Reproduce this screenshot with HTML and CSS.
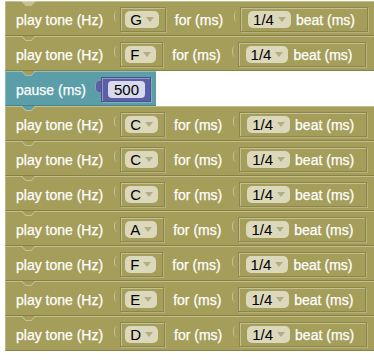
FILE: index.html
```html
<!DOCTYPE html>
<html lang="en">
<head>
    <meta charset="UTF-8">
    <title>Melody blocks</title>
    <link rel="stylesheet" href="styles.css">
</head>
<body>
    <div class="stack">
        <div class="block tone">
            <span class="label">play tone (Hz)</span>
            <span class="value note"><span class="drop">G<i class="arrow"></i></span></span>
            <span class="label">for (ms)</span>
            <span class="value beat"><span class="drop">1/4<i class="arrow"></i></span><span class="label">beat (ms)</span></span>
        </div>
        <div class="block tone">
            <span class="label">play tone (Hz)</span>
            <span class="value note"><span class="drop">F<i class="arrow"></i></span></span>
            <span class="label">for (ms)</span>
            <span class="value beat"><span class="drop">1/4<i class="arrow"></i></span><span class="label">beat (ms)</span></span>
        </div>
        <div class="block pause">
            <span class="label">pause (ms)</span>
            <span class="value number"><span class="field">500</span></span>
        </div>
        <div class="block tone">
            <span class="label">play tone (Hz)</span>
            <span class="value note"><span class="drop">C<i class="arrow"></i></span></span>
            <span class="label">for (ms)</span>
            <span class="value beat"><span class="drop">1/4<i class="arrow"></i></span><span class="label">beat (ms)</span></span>
        </div>
        <div class="block tone">
            <span class="label">play tone (Hz)</span>
            <span class="value note"><span class="drop">C<i class="arrow"></i></span></span>
            <span class="label">for (ms)</span>
            <span class="value beat"><span class="drop">1/4<i class="arrow"></i></span><span class="label">beat (ms)</span></span>
        </div>
        <div class="block tone">
            <span class="label">play tone (Hz)</span>
            <span class="value note"><span class="drop">C<i class="arrow"></i></span></span>
            <span class="label">for (ms)</span>
            <span class="value beat"><span class="drop">1/4<i class="arrow"></i></span><span class="label">beat (ms)</span></span>
        </div>
        <div class="block tone">
            <span class="label">play tone (Hz)</span>
            <span class="value note"><span class="drop">A<i class="arrow"></i></span></span>
            <span class="label">for (ms)</span>
            <span class="value beat"><span class="drop">1/4<i class="arrow"></i></span><span class="label">beat (ms)</span></span>
        </div>
        <div class="block tone">
            <span class="label">play tone (Hz)</span>
            <span class="value note"><span class="drop">F<i class="arrow"></i></span></span>
            <span class="label">for (ms)</span>
            <span class="value beat"><span class="drop">1/4<i class="arrow"></i></span><span class="label">beat (ms)</span></span>
        </div>
        <div class="block tone">
            <span class="label">play tone (Hz)</span>
            <span class="value note"><span class="drop">E<i class="arrow"></i></span></span>
            <span class="label">for (ms)</span>
            <span class="value beat"><span class="drop">1/4<i class="arrow"></i></span><span class="label">beat (ms)</span></span>
        </div>
        <div class="block tone">
            <span class="label">play tone (Hz)</span>
            <span class="value note"><span class="drop">D<i class="arrow"></i></span></span>
            <span class="label">for (ms)</span>
            <span class="value beat"><span class="drop">1/4<i class="arrow"></i></span><span class="label">beat (ms)</span></span>
        </div>
    </div>
</body>
</html>
```
FILE: styles.css
```css
body {
    margin: 0;
    background: #fff;
    font-family: "Liberation Sans", Arial, sans-serif;
    font-size: 14px;
}

.stack {
    display: flex;
    flex-direction: column;
    align-items: flex-start;
    padding: 1px 0 0 5px;
}

.block {
    position: relative;
    display: flex;
    align-items: center;
    height: 35px;
    box-sizing: border-box;
    padding: 5px 10px 3px 10px;
    color: #fff;
}

.tone {
    background-color: #a59e5b;
    border-top: 1px solid #c3be8b;
    border-left: 1px solid #bdb883;
    border-bottom: 1px solid #878146;
    border-right: 1px solid #878146;
}

.pause {
    background-color: #5b9ea7;
    border-top: 1px solid #8ebfc6;
    border-left: 1px solid #86b9c0;
    border-bottom: 1px solid #478189;
    padding-right: 5px;
}

/* notch highlight on top and tab below each block */
.block::before {
    content: '';
    position: absolute;
    left: 15px;
    top: -1px;
    width: 15px;
    height: 5px;
    background: rgba(255, 255, 255, 0.35);
    clip-path: polygon(0 0, 100% 0, 70% 100%, 30% 100%);
}

.block::after {
    content: '';
    position: absolute;
    left: 16px;
    bottom: -5px;
    width: 13px;
    height: 4px;
    background: inherit;
    clip-path: polygon(0 0, 100% 0, 70% 100%, 30% 100%);
    z-index: 2;
}

.label {
    white-space: nowrap;
    -webkit-text-stroke: 0.25px #fff;
}

.value {
    position: relative;
    display: inline-flex;
    align-items: center;
    height: 25px;
    box-sizing: border-box;
    margin-left: 17px;
    margin-right: 9px;
    border: 1px solid rgba(0, 0, 0, 0.15);
    box-shadow: inset 1px 1px 0 rgba(255, 255, 255, 0.35), 1px 1px 0 rgba(255, 255, 255, 0.2);
}

.value::before {
    content: '';
    position: absolute;
    left: -7px;
    top: 3px;
    width: 6px;
    height: 11px;
    border-radius: 4px 0 0 4px;
    border-left: 1px solid rgba(255, 255, 255, 0.35);
    box-sizing: border-box;
}

.note,
.beat {
    background-color: #a59e5b;
}

.note::before,
.beat::before {
    background-color: #a59e5b;
}

.note {
    padding: 0 6px 0 4px;
}

.beat {
    padding: 0 12px 0 7px;
    margin-right: 0;
    gap: 5px;
}

.drop {
    display: inline-flex;
    align-items: center;
    gap: 4px;
    height: 17px;
    padding: 0 5px;
    border-radius: 5px;
    background-color: #dcd8bb;
    color: #000;
    font-size: 15px;
}

.arrow {
    width: 0;
    height: 0;
    border-left: 4px solid transparent;
    border-right: 4px solid transparent;
    border-top: 5px solid #b2ad85;
}

.number {
    background-color: #5b60a6;
    margin-left: 15px;
    margin-right: 0;
    padding: 0 5px 0 6px;
}

.number::before {
    background-color: #5b60a6;
}

.field {
    display: inline-flex;
    align-items: center;
    height: 17px;
    padding: 0 6px;
    border-radius: 4px;
    background-color: #d9daee;
    color: #000;
    font-size: 15px;
}
```
